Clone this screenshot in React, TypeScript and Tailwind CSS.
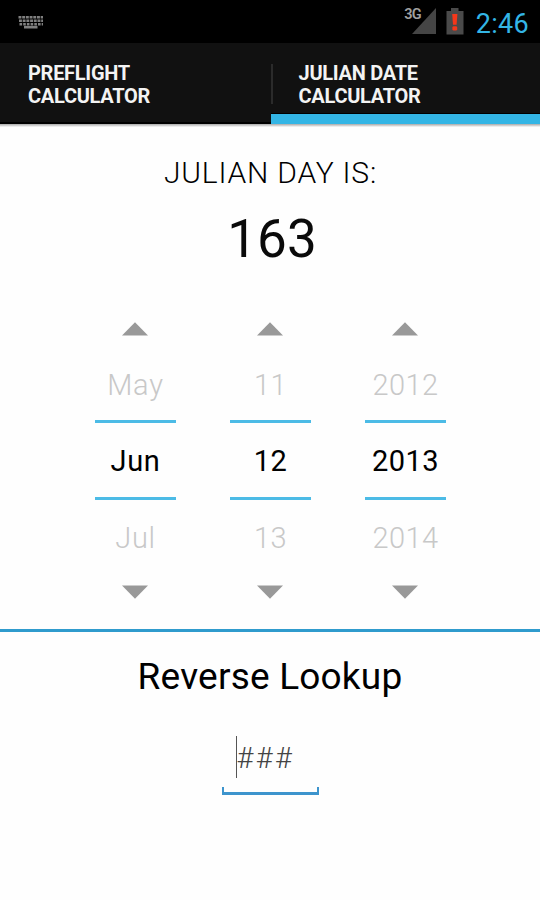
import React from "react";

type Column = { values: [string, string, string]; tracking: string };

const columns: Column[] = [
  { values: ["May", "Jun", "Jul"], tracking: "tracking-[0.7px]" },
  { values: ["11", "12", "13"], tracking: "tracking-[0.4px]" },
  { values: ["2012", "2013", "2014"], tracking: "tracking-[0.4px]" },
];

function Arrow({ down = false }: { down?: boolean }) {
  return (
    <svg width="26" height="14" viewBox="0 0 26 14" className="block">
      <path d={down ? "M0 0.5H26L13 13.7Z" : "M0 13.5H26L13 0.3Z"} fill="#999" />
    </svg>
  );
}

function KeyboardIcon() {
  return (
    <svg width="26" height="14" viewBox="0 0 26 14" className="block">
      <g fill="none" stroke="#808080" strokeWidth="2.6">
        <path d="M0.5 2.2H25" strokeDasharray="2.9 0.8" />
        <path d="M1 5.8H25" strokeDasharray="2.9 0.8" />
        <path d="M1.500 9.200H25" strokeDasharray="2.6 1.1" />
        <path d="M6 12.200H19.500" strokeWidth="2.6" />
      </g>
    </svg>
  );
}

function StatusBar() {
  return (
    <div className="flex h-[43px] items-start justify-between bg-black pl-[18px] pr-[11px]">
      <div className="pt-[15px]">
        <KeyboardIcon />
      </div>
      <div className="flex items-start">
        <span className="mt-[7px] -mr-[9px] text-[14.5px] leading-[15px] font-semibold tracking-[-0.9px] text-[#a0a0a0]">
          3G
        </span>
        <svg width="24" height="27" viewBox="0 0 24 27" className="mt-[7px] block">
          <path d="M24 1V27H0Z" fill="#454545" />
        </svg>
        <svg width="18" height="27" viewBox="0 0 18 27" className="mt-[8px] ml-[10px] block">
          <path d="M5 0H12.5V3H17.5V26.5H0.5V3H5Z" fill="#4a4a4a" />
          <path d="M6.2 6H11.4L10.6 16.8H7Z" fill="#f5371a" />
          <rect x="6.4" y="18.2" width="4.800" height="4.400" rx="1.400" fill="#f5371a" />
        </svg>
        <span className="mt-[8px] ml-[12px] text-[27px] leading-[32px] tracking-[0.3px] text-[#33b5e5]">2:46</span>
      </div>
    </div>
  );
}

function Tabs() {
  return (
    <div className="flex h-[81px] bg-[#111] text-[20px] leading-[22.5px] font-bold tracking-[-0.28px] text-[#f3f3f3]">
      <div className="w-[271px] border-b-2 border-black pt-[19px] pl-[28px]">
        <div>PREFLIGHT</div>
        <div>CALCULATOR</div>
      </div>
      <div className="flex flex-1 flex-col justify-between">
        <div className="flex pt-[19px]">
          <div className="mt-[2px] mr-[26px] h-[40px] w-[1.500px] bg-[#2b2b2b]" />
          <div>
            <div>JULIAN DATE</div>
            <div>CALCULATOR</div>
          </div>
        </div>
        <div className="h-[11px] border-t border-black bg-[#33b5e5]" />
      </div>
    </div>
  );
}

function Picker({ values, tracking }: Column) {
  return (
    <div className={`flex w-[81px] flex-col items-center text-[29px] whitespace-nowrap ${tracking}`}>
      <Arrow />
      <div className="flex h-[84px] items-center pt-[16px] pl-px font-light text-[#c8c8c8]">{values[0]}</div>
      <div className="flex h-[80px] w-full items-center justify-center border-y-[3px] border-[#4cbbe6] pt-[4px] pl-px text-black">
        {values[1]}
      </div>
      <div className="flex h-[85px] items-center pb-[7px] pl-px font-light text-[#c8c8c8]">{values[2]}</div>
      <Arrow down />
    </div>
  );
}

export default function App() {
  return (
    <div className="flex h-[900px] w-[540px] flex-col overflow-hidden bg-[#fefefe] font-['Roboto',sans-serif]">
      <StatusBar />
      <Tabs />
      <div className="h-[3px] bg-linear-to-b from-[#a8a8a8] to-[#fafafa]" />
      <main className="flex flex-col items-center">
        <h1 className="mt-[26px] pl-px text-[30px] leading-[40px] font-light tracking-[0.8px] text-black">JULIAN DAY IS:</h1>
        <div className="mt-[16px] pl-[4px] text-[53px] leading-[60px] text-[#0a0a0a]">163</div>
        <div className="mt-[53px] flex gap-[54px]">
          {columns.map((c) => (
            <Picker key={c.values[0]} {...c} />
          ))}
        </div>
        <div className="mt-[30px] h-[3px] w-full bg-[#2f9bcd]" />
        <h2 className="mt-[23px] text-[37px] leading-[44px] tracking-[0.2px] text-black">Reverse Lookup</h2>
        <div className="mt-[37px] flex h-[59px] w-[97px] flex-col justify-between">
          <div className="ml-[14px] flex h-[42px] items-center border-l border-[#555] pt-[4px] text-[29px] font-light tracking-[2.400px] text-[#444]">
            ###
          </div>
          <div className="h-[8px] border-x-2 border-b-[3px] border-[#3d94cd]" />
        </div>
      </main>
    </div>
  );
}
